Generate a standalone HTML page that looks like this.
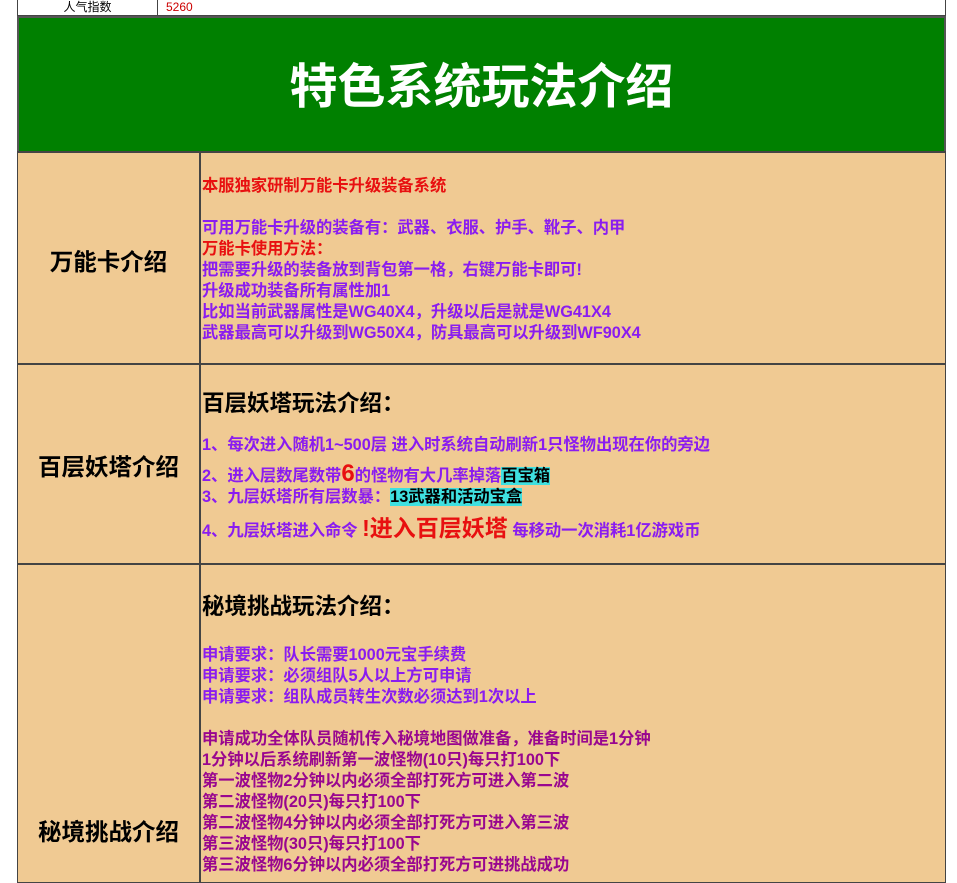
<!DOCTYPE html>
<html><head><meta charset="utf-8"><style>
*{margin:0;padding:0;box-sizing:border-box}
body{width:957px;height:866px;overflow:hidden;background:#fff;font-family:"Liberation Sans","Noto Sans CJK SC",sans-serif;position:relative}
.a{position:absolute}
.top{left:17px;top:-2px;width:929px;height:18px;border:1px solid #444;border-top:none;background:#fff}
.top .l{position:absolute;left:0;top:0;width:140px;height:17px;border-right:1px solid #444;font-size:12px;text-align:center;line-height:18px;color:#000}
.top .r{position:absolute;left:148px;top:0;font-size:12px;line-height:18px;color:#c00}
.green{left:17px;top:16px;width:929px;height:137px;background:#008000;border:2px solid #555;color:#fff;font-weight:bold;font-size:48px;text-align:center;line-height:140px}
.row{left:17px;width:929px;background:#F0CA93;border:1px solid #444;border-top:2px solid #444}
.lab{position:absolute;left:0;top:0;bottom:0;width:183px;border-right:2px solid #444;font-size:23.5px;font-weight:bold;display:flex;align-items:center;justify-content:center;color:#000}
.c{position:absolute;left:184px;font-weight:bold;font-size:16.3px;line-height:21px;white-space:nowrap}
.p{color:#8a1cf0}.r{color:#e81010}.m{color:#99068f}
.h{font-size:22.5px;color:#000}
.hl{background:#3fe0e0;color:#000}
</style></head><body>
<div class="a top"><div class="l">人气指数</div><div class="r">5260</div></div>
<div class="a green">特色系统玩法介绍</div>

<div class="a row" style="top:151px;height:214px">
<div class="lab" style="padding-top:2px">万能卡介绍</div>
<div class="c" style="top:23px">
<div class="r">本服独家研制万能卡升级装备系统</div>
<div>&nbsp;</div>
<div class="p">可用万能卡升级的装备有：武器、衣服、护手、靴子、内甲</div>
<div class="r">万能卡使用方法：</div>
<div class="p">把需要升级的装备放到背包第一格，右键万能卡即可!</div>
<div class="p">升级成功装备所有属性加1</div>
<div class="p">比如当前武器属性是WG40X4，升级以后是就是WG41X4</div>
<div class="p">武器最高可以升级到WG50X4，防具最高可以升级到WF90X4</div>
</div></div>

<div class="a row" style="top:363px;height:202px">
<div class="lab">百层妖塔介绍</div>
<div class="c h" style="top:26px;line-height:26px">百层妖塔玩法介绍：</div>
<div class="c p" style="top:70px">1、每次进入随机1~500层 进入时系统自动刷新1只怪物出现在你的旁边</div>
<div class="c p" style="top:96px;line-height:26px">2、进入层数尾数带<span class="r" style="font-size:24px">6</span>的怪物有大几率掉落<span class="hl">百宝箱</span></div>
<div class="c p" style="top:122px">3、九层妖塔所有层数暴：<span class="hl">13武器和活动宝盒</span></div>
<div class="c p" style="top:148px;line-height:30px">4、九层妖塔进入命令 <span class="r" style="font-size:23px">!进入百层妖塔</span> 每移动一次消耗1亿游戏币</div>
</div>

<div class="a row" style="top:563px;height:320px">
<div class="lab" style="display:block;text-align:center;padding-top:250px;line-height:34px">秘境挑战介绍</div>
<div class="c h" style="top:29px;line-height:26px">秘境挑战玩法介绍：</div>
<div class="c" style="top:80px">
<div class="p">申请要求：队长需要1000元宝手续费</div>
<div class="p">申请要求：必须组队5人以上方可申请</div>
<div class="p">申请要求：组队成员转生次数必须达到1次以上</div>
<div>&nbsp;</div>
<div class="m">申请成功全体队员随机传入秘境地图做准备，准备时间是1分钟</div>
<div class="m">1分钟以后系统刷新第一波怪物(10只)每只打100下</div>
<div class="m">第一波怪物2分钟以内必须全部打死方可进入第二波</div>
<div class="m">第二波怪物(20只)每只打100下</div>
<div class="m">第二波怪物4分钟以内必须全部打死方可进入第三波</div>
<div class="m">第三波怪物(30只)每只打100下</div>
<div class="m">第三波怪物6分钟以内必须全部打死方可进挑战成功</div>
</div></div>
</body></html>
